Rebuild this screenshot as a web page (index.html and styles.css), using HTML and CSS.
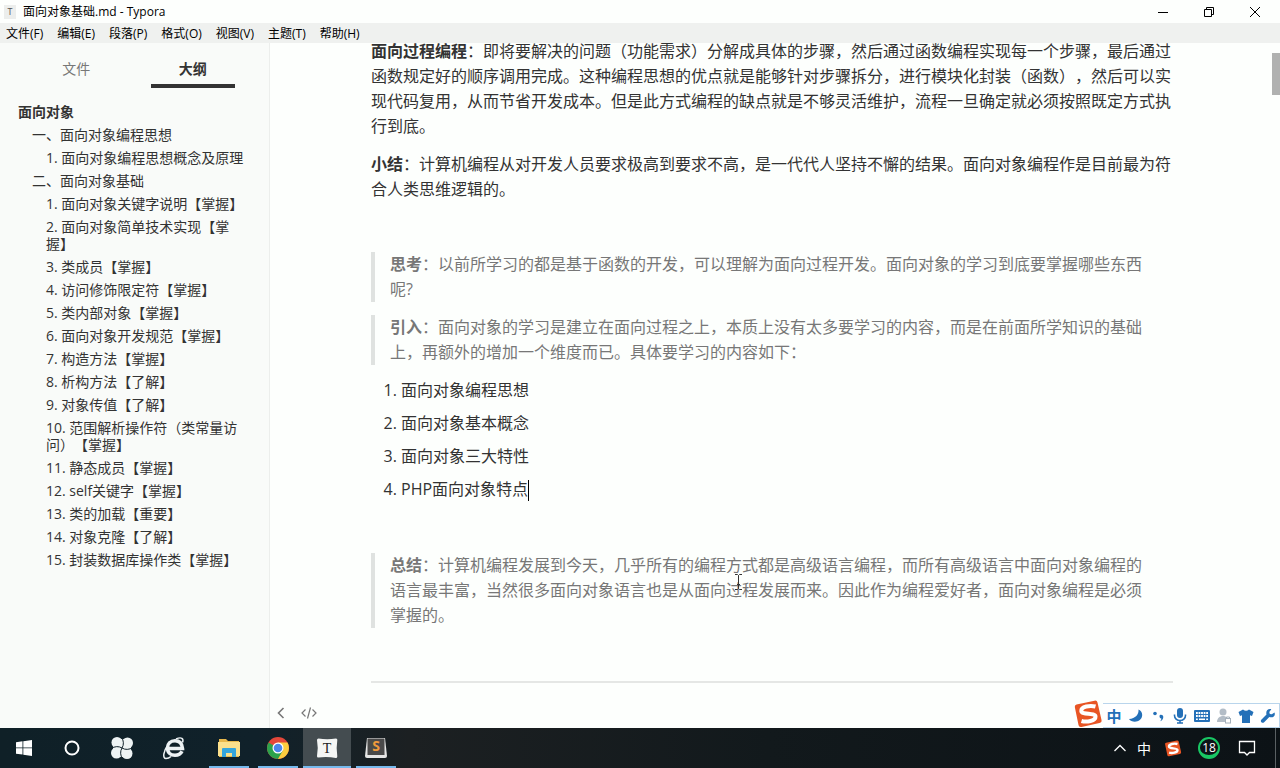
FILE: index.html
```html
<!DOCTYPE html>
<html lang="zh-CN">
<head>
<meta charset="utf-8">
<title>面向对象基础.md - Typora</title>
<link rel="stylesheet" href="styles.css">
</head>
<body>
<div class="desktop">
  <header class="titlebar">
    <span class="app-icon">T</span>
    <span class="window-title">面向对象基础.md - Typora</span>
    <div class="window-buttons">
      <button type="button" aria-label="最小化"><svg width="12" height="12" viewBox="0 0 12 12"><path d="M1 6.5h10"/></svg></button>
      <button type="button" aria-label="还原"><svg width="12" height="12" viewBox="0 0 12 12"><path d="M1.5 3.5h7v7h-7zM3.5 3.500v-2h7v7h-2"/></svg></button>
      <button type="button" aria-label="关闭"><svg width="12" height="12" viewBox="0 0 12 12"><path d="M1 1l10 10M11 1L1 11"/></svg></button>
    </div>
  </header>
  <nav class="menubar">
    <button type="button">文件(F)</button>
    <button type="button">编辑(E)</button>
    <button type="button">段落(P)</button>
    <button type="button">格式(O)</button>
    <button type="button">视图(V)</button>
    <button type="button">主题(T)</button>
    <button type="button">帮助(H)</button>
  </nav>
  <div class="workspace">
    <aside class="sidebar">
      <div class="tabs">
        <button type="button" class="tab"><span>文件</span></button>
        <button type="button" class="tab tab-active"><span>大纲</span></button>
      </div>
      <nav class="outline">
        <a href="#" class="level-1">面向对象</a>
        <a href="#" class="level-2">一、面向对象编程思想</a>
        <a href="#" class="level-3">1. 面向对象编程思想概念及原理</a>
        <a href="#" class="level-2">二、面向对象基础</a>
        <a href="#" class="level-3">1. 面向对象关键字说明【掌握】</a>
        <a href="#" class="level-3">2. 面向对象简单技术实现【掌握】</a>
        <a href="#" class="level-3">3. 类成员【掌握】</a>
        <a href="#" class="level-3">4. 访问修饰限定符【掌握】</a>
        <a href="#" class="level-3">5. 类内部对象【掌握】</a>
        <a href="#" class="level-3">6. 面向对象开发规范【掌握】</a>
        <a href="#" class="level-3">7. 构造方法【掌握】</a>
        <a href="#" class="level-3">8. 析构方法【了解】</a>
        <a href="#" class="level-3">9. 对象传值【了解】</a>
        <a href="#" class="level-3">10. 范围解析操作符（类常量访问）【掌握】</a>
        <a href="#" class="level-3">11. 静态成员【掌握】</a>
        <a href="#" class="level-3">12. self关键字【掌握】</a>
        <a href="#" class="level-3">13. 类的加载【重要】</a>
        <a href="#" class="level-3">14. 对象克隆【了解】</a>
        <a href="#" class="level-3">15. 封装数据库操作类【掌握】</a>
      </nav>
    </aside>
    <main class="editor">
      <article class="document">
        <p><strong>面向过程编程</strong>：即将要解决的问题（功能需求）分解成具体的步骤，然后通过函数编程实现每一个步骤，最后通过函数规定好的顺序调用完成。这种编程思想的优点就是能够针对步骤拆分，进行模块化封装（函数），然后可以实现代码复用，从而节省开发成本。但是此方式编程的缺点就是不够灵活维护，流程一旦确定就必须按照既定方式执行到底。</p>
        <p><strong>小结</strong>：计算机编程从对开发人员要求极高到要求不高，是一代代人坚持不懈的结果。面向对象编程作是目前最为符合人类思维逻辑的。</p>
        <p class="blank"></p>
        <blockquote><strong>思考</strong>：以前所学习的都是基于函数的开发，可以理解为面向过程开发。面向对象的学习到底要掌握哪些东西呢?</blockquote>
        <blockquote><strong>引入</strong>：面向对象的学习是建立在面向过程之上，本质上没有太多要学习的内容，而是在前面所学知识的基础上，再额外的增加一个维度而已。具体要学习的内容如下：</blockquote>
        <ol>
          <li>面向对象编程思想</li>
          <li>面向对象基本概念</li>
          <li>面向对象三大特性</li>
          <li>PHP面向对象特点<span class="caret"></span></li>
        </ol>
        <p class="blank"></p>
        <blockquote><strong>总结</strong>：计算机编程发展到今天，几乎所有的编程方式都是高级语言编程，而所有高级语言中面向对象编程的语言最丰富，当然很多面向对象语言也是从面向过程发展而来。因此作为编程爱好者，面向对象编程是必须掌握的。</blockquote>
        <p class="blank"></p>
        <hr>
      </article>
      <div class="scroll-track"><div class="scroll-thumb"></div></div>
      <div class="view-buttons">
        <button type="button" aria-label="隐藏侧边栏"><svg width="16" height="16" viewBox="0 0 16 16"><path d="M10.500 3L5.500 8l5 5" stroke-width="1.600"/></svg></button>
        <button type="button" aria-label="源代码模式"><svg width="16" height="16" viewBox="0 0 16 16"><path d="M4.500 4.500L1 8l3.500 3.500M11.500 4.500L15 8l-3.500 3.500M9.500 2.500l-3 11" stroke-width="1.200"/></svg></button>
      </div>
    </main>
    <svg class="pointer" width="9" height="16" viewBox="0 0 9 16"><path d="M1 .5h2.500l1 1 1-1H8M4.500 1.500v13M1 15.500h2.500l1-1 1 1H8M3 10.500h3"/></svg>
    <div class="ime">
      <svg class="ime-logo" width="30" height="28" viewBox="0 0 30 28"><path d="M3.500 4.500Q1.500 5 1.800 7L5.500 25q.4 2.500 3 2L26.500 23q2.500-.6 2-3L24.500 2.500Q24 .2 21.500.7z" fill="#e85524"/><path d="M22.500 6.500C17 5 8 6.500 8.300 11c.3 4 14 1.500 14.200 5.500.2 4.500-9 6-14 4.500" fill="none" stroke="#fff" stroke-width="4"/></svg>
      <div class="ime-bar">
        <button type="button" class="ime-lang">中</button>
        <button type="button" aria-label="全半角"><svg width="16" height="16" viewBox="0 0 16 16"><path d="M10.500 1.500C11 6.500 7.500 10.500 1 11c3 4.500 13 3.500 13.200-4C14.200 4.500 13 2.500 10.500 1.500z"/></svg></button>
        <button type="button" aria-label="中英文标点"><svg width="16" height="16" viewBox="0 0 16 16"><circle cx="5" cy="5.500" r="1.800"/><path d="M9.500 8c0-1.800 3.800-1.800 3.800.9 0 2.200-1.500 3.800-3.200 4.300 1-1 1.300-1.800 1.200-2.700-1 0-1.800-.8-1.800-2.500z"/></svg></button>
        <button type="button" aria-label="语音"><svg width="16" height="16" viewBox="0 0 16 16"><rect x="5" y="0" width="6" height="10" rx="3"/><path d="M2.500 6.500v1a5.500 5 0 0 0 11 0v-1M8 12v3M5 15h6" fill="none" stroke="#2470b8" stroke-width="1.600"/></svg></button>
        <button type="button" aria-label="软键盘"><svg width="16" height="16" viewBox="0 0 16 16"><rect y="2" width="16" height="12" rx="1"/><path d="M2 5h12M2 8h12" stroke="#fff" stroke-width="1.800" stroke-dasharray="1.800 .75"/><path d="M2 11.300h1.800M5 11.300h6M12.200 11.300H14" stroke="#fff" stroke-width="1.500"/></svg></button>
        <button type="button" aria-label="登录"><svg width="16" height="16" viewBox="0 0 16 16"><g fill="#b3bdc7"><circle cx="7" cy="4" r="3.500"/><path d="M1 14c0-8 12-8 12 0z"/></g><rect x="9.500" y="10.500" width="5" height="4.500" fill="#fff" stroke="#a4b0bb"/><path d="M10.500 10.500V9h3v1.500" fill="none" stroke="#a4b0bb"/></svg></button>
        <button type="button" aria-label="皮肤"><svg width="16" height="16" viewBox="0 0 16 16"><path d="M5 1.500q3 2.500 6 0l4.500 2.500L14 8l-2-.7V15H4V7.300L2 8 .5 4z"/></svg></button>
        <button type="button" aria-label="工具箱"><svg width="16" height="16" viewBox="0 0 16 16"><path d="M14.500 4.500l-2.700 1.800-2-.4-.5-2 2-2.700C8 .3 5.500 3 6.500 6.500L1.300 11.800c-1.500 1.700 1 4 2.600 2.600L9.300 9c3.700 1 6.500-1 5.200-4.500z"/></svg></button>
      </div>
    </div>
  </div>
  <footer class="taskbar">
    <div class="system-apps">
      <button type="button" aria-label="开始"><svg width="16" height="16" viewBox="0 0 16 16" fill="#fff"><path d="M0 2.200L6.500 1.300v6.200H0zM7.300 1.200L16 0v7.500H7.300zM0 8.300h6.500v6.300L0 13.700zM7.300 8.300H16V16l-8.700-1.200z"/></svg></button>
      <button type="button" aria-label="Cortana"><svg width="16" height="16" viewBox="0 0 16 16"><circle cx="8" cy="8" r="6.500" fill="none" stroke="#fff" stroke-width="2"/></svg></button>
    </div>
    <div class="pinned-apps">
      <button type="button" aria-label="应用"><svg width="22" height="22" viewBox="0 0 22 22"><g fill="#eef3f4"><circle cx="6" cy="5.500" r="5.500"/><circle cx="16.500" cy="6" r="5.500"/><circle cx="16" cy="16.500" r="5.500"/><circle cx="5.500" cy="16" r="5.500"/><path d="M6 2h10v18H6zM2 6h18v10H2z"/></g><path d="M11 11Q14 6 10.500 0M11 11Q16 14 22 10.500M11 11Q8 16 11.500 22M11 11Q6 8 0 11.500" fill="none" stroke="#10212a" stroke-width="1"/></svg></button>
      <button type="button" aria-label="Internet Explorer"><svg width="24" height="24" viewBox="0 0 24 24" fill="none" stroke="#edf2f4"><path d="M6 12.500h14.500C20 6.500 17 4.700 13 4.700c-4.500 0-7.500 3-7.500 7.300 0 5 3.500 7.300 7.500 7.300 3.500 0 5.700-1.300 7-4" stroke-width="3.500"/><path d="M20.500 6.500C22 2.500 19.500.5 14 3M6 9C1 15.500.5 22.500 4 22.500c1.500 0 3.500-.7 5-2" stroke-width="1.500"/></svg></button>
    </div>
    <div class="open-apps">
      <button type="button" class="running" aria-label="文件资源管理器"><svg width="22" height="20" viewBox="0 0 22 20"><path d="M1 1h7l2 2h11v16H1z" fill="#e8b84c"/><path d="M0 4h22v14H0z" fill="#fbe08c"/><path d="M4 19v-8q0-1 1-1h12q1 0 1 1v8h-4v-4H8v4z" fill="#35a5dc"/></svg></button>
      <button type="button" class="running" aria-label="Chrome"><svg width="22" height="22" viewBox="0 0 22 22"><circle cx="11" cy="11" r="11" fill="#e3473a"/><path d="M11 11L1.500 5.500A11 11 0 0 0 11 22l5-8z" fill="#2ba24c"/><path d="M11 22A11 11 0 0 0 20.500 5.500H11L15.800 13.700z" fill="#fccd3f"/><circle cx="11" cy="11" r="5.500" fill="#fff"/><circle cx="11" cy="11" r="4.300" fill="#4a86ec"/></svg></button>
      <button type="button" class="running current" aria-label="Typora"><svg width="22" height="22" viewBox="0 0 22 22"><path d="M2.500 1.500Q11 3 20 1.500q1.500 0 1.300 1.500-1.300 8 0 16.500 0 1.500-1.500 1.500-8-1.500-17.500-.5-1.500 0-1.300-1.500 1.500-8 0-16Q1 1.500 2.500 1.500z" fill="#f5f6f5"/><text x="11" y="16" class="typora-letter">T</text></svg></button>
      <button type="button" class="running" aria-label="Sublime Text"><svg width="24" height="22" viewBox="0 0 24 22"><path d="M3 1h18l2 18q0 2-2 2H3q-2 0-2-2z" fill="#e6e6e6"/><path d="M3.500 1.500h17V18h-17z" fill="#4a4a4a"/><text x="12" y="14" class="sublime-letter">S</text></svg></button>
    </div>
    <div class="tray">
      <button type="button" class="tray-small" aria-label="显示隐藏的图标"><svg width="14" height="10" viewBox="0 0 14 10"><path d="M1.500 8L7 2.500 12.500 8" fill="none" stroke="#fff" stroke-width="1.300"/></svg></button>
      <button type="button" class="tray-small tray-lang">中</button>
      <button type="button" class="tray-logo" aria-label="搜狗输入法"><svg width="18" height="17" viewBox="0 0 30 28"><path d="M3.500 4.500Q1.500 5 1.800 7L5.500 25q.4 2.500 3 2L26.500 23q2.500-.6 2-3L24.500 2.500Q24 .2 21.500.7z" fill="#e85524"/><path d="M22.500 6.500C17 5 8 6.500 8.300 11c.3 4 14 1.500 14.200 5.500.2 4.500-9 6-14 4.500" fill="none" stroke="#fff" stroke-width="4"/></svg></button>
      <button type="button" class="tray-wide"><span class="badge">18</span></button>
      <button type="button" class="tray-wide" aria-label="操作中心"><svg width="18" height="18" viewBox="0 0 18 18"><path d="M1.500 2.500h15v11h-5L9 16l-2.500-2.500h-5z" fill="none" stroke="#fff" stroke-width="1.300"/></svg></button>
      <span class="show-desktop"></span>
    </div>
  </footer>
</div>
</body>
</html>
```

FILE: styles.css
```css
* { box-sizing: border-box; }
body {
  margin: 0;
  font-family: "Open Sans", "Noto Sans CJK SC", sans-serif;
  color: #333;
  text-spacing-trim: space-all;
}
button {
  margin: 0;
  padding: 0;
  border: 0;
  background: none;
  font: inherit;
  color: inherit;
}
.desktop {
  display: flex;
  flex-direction: column;
  height: 100vh;
  overflow: hidden;
  background: #fdfffd;
}

.titlebar {
  display: flex;
  align-items: center;
  flex: none;
  height: 23px;
  padding-left: 4px;
  font-size: 12px;
  line-height: 18px;
  color: #000;
}
.app-icon {
  width: 12px;
  height: 14px;
  margin-right: 7px;
  background: #eceeec;
  font-size: 9px;
  line-height: 14px;
  text-align: center;
  color: #555;
}
.window-title { flex: 1; }
.window-buttons { display: flex; padding-right: 2px; }
.window-buttons button {
  display: grid;
  place-items: center;
  width: 46px;
  height: 20px;
}
.window-buttons svg { fill: none; stroke: #000; stroke-width: 1; }

.menubar {
  display: flex;
  flex: none;
  gap: 14px;
  height: 20px;
  padding: 1px 6px 0;
  background: #eff1ef;
  font-size: 12px;
  line-height: 20px;
  color: #000;
}

.workspace {
  position: relative;
  display: flex;
  flex: 1;
  min-height: 0;
}
.sidebar {
  flex: none;
  width: 270px;
  overflow: hidden;
  border-right: 1px solid #eceeec;
  background: #f9fbf9;
  font-size: 14px;
}
.tabs {
  display: flex;
  justify-content: center;
  padding: 0 18px;
}
.tab {
  flex: 1;
  display: flex;
  justify-content: center;
  color: #777;
}
.tab span {
  width: 84px;
  padding-top: 10px;
  border-bottom: 4px solid transparent;
  line-height: 31px;
}
.tab-active { font-weight: 700; color: #333; }
.tab-active span { border-color: #333; }
.outline {
  display: flex;
  flex-direction: column;
  padding: 12px 18px;
}
.outline a {
  padding: 3px 0;
  line-height: 17px;
  color: #333;
  text-decoration: none;
}
.outline .level-1 { font-weight: 700; }
.outline .level-2 { padding-left: 14px; }
.outline .level-3 { padding-left: 28px; }

.editor {
  position: relative;
  display: flex;
  flex: 1;
  min-width: 0;
  padding-left: 2px;
  overflow: hidden;
}
.document {
  display: flex;
  flex-direction: column;
  gap: 13px;
  flex: 0 1 802px;
  min-width: 0;
  margin: -4px auto 0;
  font-size: 16px;
  line-height: 25px;
}
.document p, .document ol { margin: 0; }
.document .blank { height: 24px; }
.document blockquote {
  margin: 0;
  padding: 0 20px 0 15px;
  border-left: 4px solid #dfe2e0;
  color: #777;
}
.document ol {
  display: flex;
  flex-direction: column;
  gap: 8px;
  padding: 0 0 1px 30px;
}
.caret {
  display: inline-block;
  width: 1px;
  height: 21px;
  background: #000;
  vertical-align: middle;
}
.document hr {
  width: 100%;
  height: 2px;
  margin: 3px 0 0;
  border: 0;
  background: #e5e7e5;
}
.scroll-track {
  flex: none;
  width: 8px;
  padding-top: 10px;
}
.scroll-thumb { height: 42px; background: #b0b1b0; }
.view-buttons {
  position: absolute;
  left: 3px;
  bottom: 7px;
  display: flex;
  gap: 12px;
}
.view-buttons button { display: flex; }
.view-buttons svg { fill: none; stroke: #777; }
.pointer {
  position: absolute;
  left: 734px;
  top: 531px;
  fill: none;
  stroke: #333;
}
.ime {
  position: absolute;
  right: 0;
  bottom: 0;
  display: flex;
  align-items: flex-end;
}
.ime-bar {
  display: flex;
  height: 25px;
  border: solid #b9d5ec;
  border-width: 1px 1px 1px 0;
  background: #fff;
}
.ime-bar button {
  display: grid;
  place-items: center;
  width: 22px;
}
.ime-bar svg { fill: #2470b8; }
.ime-lang { font-size: 15px; font-weight: 700; line-height: 22px; color: #2470b8; }

.taskbar {
  display: flex;
  flex: none;
  height: 40px;
  background: linear-gradient(90deg, #0f2027, #10212a 20%, #1c2022 32%, #12191c 60%, #0c1216);
  color: #fff;
}
.taskbar div { display: flex; }
.taskbar button {
  display: grid;
  place-items: center;
  width: 48px;
}
.taskbar .pinned-apps button { width: 52px; }
.open-apps { gap: 1px; margin-left: 5px; }
.taskbar .running {
  background: linear-gradient(#76b9ed, #76b9ed) center bottom / 40px 2px no-repeat;
}
.taskbar .current {
  background-color: #444c50;
  background-size: 100% 2px;
}
.typora-letter {
  font: 14px "Liberation Serif", serif;
  text-anchor: middle;
  fill: #222;
}
.sublime-letter {
  font-size: 14px;
  font-weight: 700;
  text-anchor: middle;
  fill: #f09a3c;
}
.tray { margin-left: auto; }
.taskbar .tray-small { width: 24px; }
.tray-lang { font-size: 14px; }
.taskbar .tray-logo { width: 34px; }
.taskbar .tray-wide { width: 38px; }
.badge {
  width: 22px;
  height: 22px;
  border: 2px solid #19c764;
  border-bottom-width: 4px;
  border-radius: 50%;
  font-size: 12px;
  line-height: 17px;
}
.show-desktop {
  width: 5px;
  margin-left: 9px;
  border-left: 1px solid #5a6063;
}
```
